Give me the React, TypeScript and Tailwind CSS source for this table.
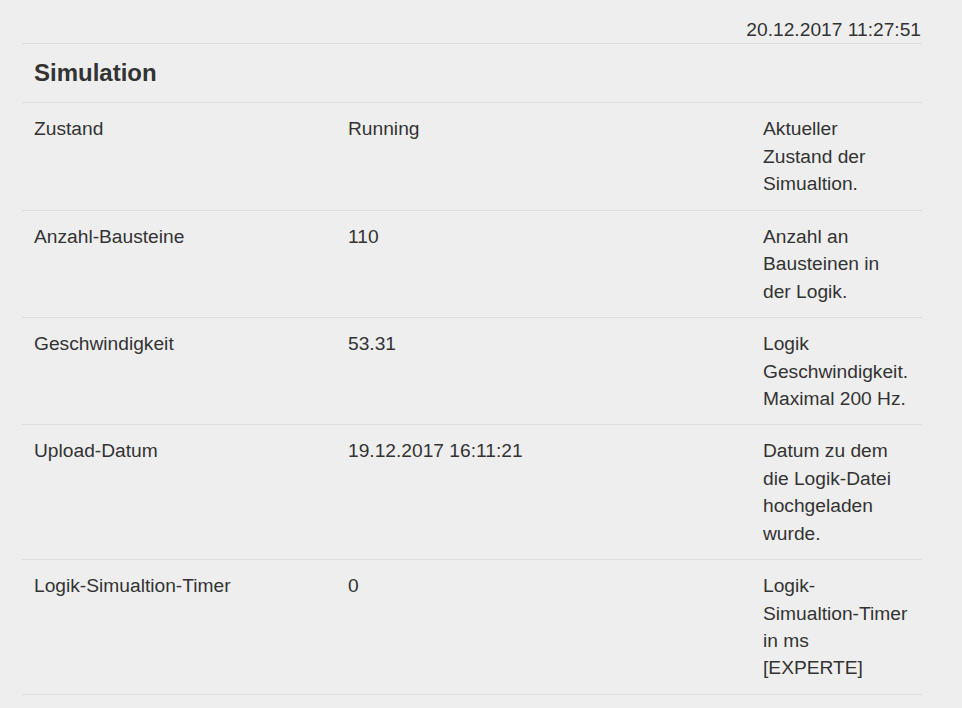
interface SimRow {
  label: string;
  value: string;
  description: string;
}

const rows: SimRow[] = [
  { label: 'Zustand', value: 'Running', description: 'Aktueller Zustand der Simualtion.' },
  { label: 'Anzahl-Bausteine', value: '110', description: 'Anzahl an Bausteinen in der Logik.' },
  { label: 'Geschwindigkeit', value: '53.31', description: 'Logik Geschwindigkeit. Maximal 200 Hz.' },
  { label: 'Upload-Datum', value: '19.12.2017 16:11:21', description: 'Datum zu dem die Logik-Datei hochgeladen wurde.' },
  { label: 'Logik-Simualtion-Timer', value: '0', description: 'Logik-Simualtion-Timer in ms [EXPERTE]' },
];

export default function App() {
  return (
    <div className="min-h-[708px] bg-[#eeeeee] text-[#333333] font-['Liberation_Sans',Arial,sans-serif] text-[19.2px] leading-[27.43px]">
      <div className="ml-[22px] w-[900px]">
        <div className="pt-[16px] pr-px text-right border-b border-[#dddddd]">20.12.2017 11:27:51</div>
        <div className="h-[59px] px-3 flex items-center border-b border-[#dddddd]">
          <h2 className="text-[24px] font-bold leading-none pb-px">Simulation</h2>
        </div>
        <table className="w-full border-collapse">
          <tbody>
            {rows.map((row) => (
              <tr key={row.label} className="border-b border-[#dddddd] align-top">
                <td className="w-[314px] p-3">{row.label}</td>
                <td className="w-[415px] p-3">{row.value}</td>
                <td className="p-3">{row.description}</td>
              </tr>
            ))}
          </tbody>
        </table>
      </div>
    </div>
  );
}
